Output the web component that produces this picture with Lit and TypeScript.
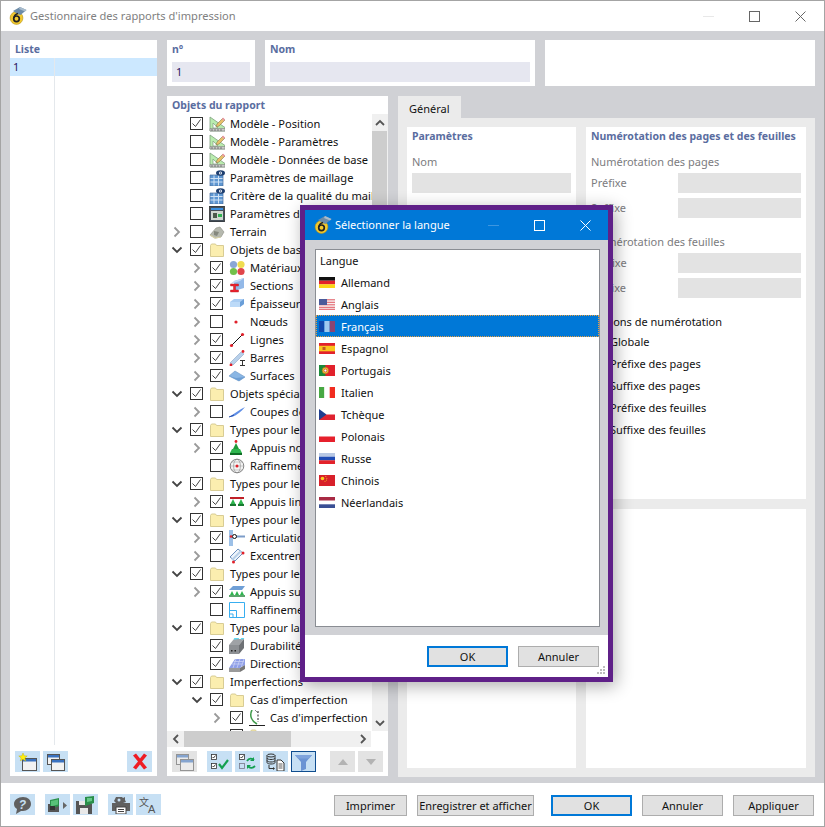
import { LitElement, html, css, svg } from "lit";
import { customElement } from "lit/decorators.js";

const ico = (body: unknown, w = 16, h = 16) =>
  html`<svg class="ic" width=${w} height=${h} viewBox="0 0 ${w} ${h}">${body}</svg>`;

const ICONS: Record<string, unknown> = {
  ruler: svg`<path d="M1 1v14h15v-3.500L1 1z" fill="#b9ecae" stroke="#7fa07f" stroke-width=".8"/><path d="M4 7v5h5z" fill="#fff" stroke="#7fa07f" stroke-width=".7"/><path d="M1 12.500h15V15H1z" fill="#c9cbc9" stroke="#777" stroke-width=".5"/><path d="M3 13v2M6 13v2M9 13v2M12 13v2" stroke="#555" stroke-width=".7"/><path d="M8 8l6-6 2 2-6 6-3 1z" fill="#e8c16a" stroke="#8a7a4a" stroke-width=".6"/><path d="M13 3l1-1.500 2 2L14.600 5z" fill="#ee9aa8"/>`,
  mesh: svg`<path d="M1 5h13v11H1z" fill="#5f97d2"/><path d="M1 8.500h13M1 12h13M5 5v11M9.500 5v11" stroke="#cfe2f6" stroke-width="1"/><path d="M1 5h13v11H1z" fill="none" stroke="#486f9f" stroke-width=".7"/><ellipse cx="11.500" cy="3" rx="4.500" ry="2.800" fill="#1f3f70"/><circle cx="11.500" cy="3" r="1.500" fill="#fff"/><circle cx="11.500" cy="3" r=".7" fill="#1f3f70"/>`,
  params: svg`<rect x=".5" y="0" width="15" height="16" fill="#45505a" stroke="#222" stroke-width=".7"/><rect x="2" y="2" width="12" height="2" fill="#3a8fe0"/><rect x="2" y="5" width="12" height="9" fill="#cfd7cf"/><rect x="4" y="7" width="4" height="5" fill="#4a5a4a"/><rect x="9" y="8" width="4" height="3" fill="#2fb04f"/>`,
  terrain: svg`<path d="M1 11l6-7 4-1 4 5-3 5-6 1z" fill="#b5b8ae" stroke="#8d8f85" stroke-width=".6"/><path d="M5 7l5 1-2 4-3-1z" fill="#85887e"/><path d="M1 11l5 3 6-1" fill="none" stroke="#d5d0a8" stroke-width="1.200"/>`,
  folder: svg`<path d="M1.500 3.500l1-1.500h4l1 1.500h7v11h-13z" fill="#fbeeaf" stroke="#d8cc94" stroke-width="1"/>`,
  materials: svg`<circle cx="4.500" cy="4.500" r="3.600" fill="#8aa6d6"/><circle cx="12" cy="4.500" r="3.600" fill="#f0dc50"/><circle cx="4.500" cy="11.500" r="3.600" fill="#72c04a"/><circle cx="12" cy="11.500" r="3.600" fill="#e0454a"/>`,
  sections: svg`<path d="M5 3l10-3v10l-10 3z" fill="#93b9e8"/><path d="M1 6l4-3 10-3-4 3z" fill="#c4daf4"/><path d="M1.500 6h8v2h-3v4h3v2h-8v-2h3V8h-3z" fill="#ee2430" stroke="#a11" stroke-width=".4"/>`,
  thick: svg`<path d="M1 6l4-3h10v5l-4 3H1z" fill="#a9cdf3"/><path d="M1 6h10v5H1z" fill="#bcdaf8"/><path d="M11 6l4-3v5l-4 3z" fill="#6a9ed8"/>`,
  node: svg`<circle cx="7" cy="8" r="1.600" fill="#e0202a"/>`,
  line: svg`<path d="M2 14L14 2" stroke="#111" stroke-width="1"/><circle cx="2.500" cy="13.500" r="1.600" fill="#e0202a"/><circle cx="13.500" cy="2.500" r="1.600" fill="#e0202a"/>`,
  bar: svg`<path d="M1 13L12 2l3 2L4 15z" fill="#b8d0ea" stroke="#8ba6c6" stroke-width=".6"/><circle cx="2" cy="15" r="1.400" fill="#e0202a"/><circle cx="14" cy="1.500" r="1.400" fill="#e0202a"/><path d="M11 11h5M13.500 11v5M11 16h5" stroke="#333" stroke-width="1" transform="translate(0 -.5)"/>`,
  surface: svg`<path d="M0 8l6-5 10 6-6 4z" fill="#8ab6e4" stroke="#6f97c4" stroke-width=".6"/><path d="M0 8l10 5 6-4-9 1z" fill="#6d9ed4"/>`,
  cut: svg`<path d="M0 13C6 9 10 6 16 3c-3 4-8 8-13 10z" fill="#5f8ee6"/><path d="M0 13l5-2" stroke="#2a4fa8" stroke-width="1"/>`,
  nodal: svg`<circle cx="7" cy="1.500" r="1.400" fill="#e0202a"/><path d="M7 3l3 6H4z" fill="#1f9a3a"/><path d="M3 9h8l2 4H1z" fill="#2db54e"/><path d="M1 13h12v2H1z" fill="#0f6d26"/>`,
  refine: svg`<circle cx="8" cy="8" r="6.800" fill="#f4f4f4" stroke="#666" stroke-width=".8"/><ellipse cx="8" cy="8" rx="3.400" ry="6.800" fill="none" stroke="#888" stroke-width=".6"/><path d="M1 8h14M2.500 4h11M2.500 12h11" stroke="#999" stroke-width=".5"/><circle cx="8" cy="8" r="1.500" fill="#e0202a"/>`,
  linesup: svg`<path d="M1 3h14v2H1z" fill="#c02028"/><path d="M4 5l2.500 5h-5zM12 5l2.500 5h-5z" fill="#2db54e"/><path d="M1 10h6v2H1zM9 10h6v2H9z" fill="#187a30"/>`,
  hinge: svg`<path d="M1 0v16M3 0v16" stroke="#7cace0" stroke-width="1.500"/><path d="M6 6.500h10" stroke="#7c9cc8" stroke-width="2"/><circle cx="5.500" cy="6.500" r="2" fill="#fff" stroke="#111" stroke-width="1"/><circle cx="2" cy="6.500" r="1.300" fill="#e0202a"/>`,
  excent: svg`<path d="M1 9l8-8 5 4-8 8z" fill="#eef4fb" stroke="#6a8fbf" stroke-width="1"/><path d="M3 12L12 3" stroke="#b8cfe8" stroke-width="2"/><circle cx="4.500" cy="14" r="1.500" fill="#e0202a"/><circle cx="14" cy="5" r="1.500" fill="#e0202a"/>`,
  surfsup: svg`<path d="M0 6l4-4h12l-3 4z" fill="#6f9fd6"/><path d="M3 7l2 4H1zM8 7l2 4H6zM13 7l2 4h-4z" fill="#2db54e"/><path d="M0 11h16v2H0z" fill="#5aa46a"/>`,
  refsurf: svg`<path d="M.5 .5h15v15H.5z" fill="#fff" stroke="#38aef0" stroke-width="1"/><path d="M.5 8.500h7v7M.5 12h3.500v3.500" fill="none" stroke="#38aef0" stroke-width="1"/>`,
  durab: svg`<path d="M0 7l5-6h10l-5 6z" fill="#9fa2a6"/><path d="M0 7h10v9H0z" fill="#8d9094"/><path d="M10 7l5-6v9l-5 6z" fill="#6e7175"/><path d="M5 1l5-1M12 1l3-1" stroke="#5fd8f0" stroke-width="1.500"/><rect x="2" y="12" width="1.500" height="1.500" fill="#222"/><rect x="5.500" y="12" width="1.500" height="1.500" fill="#222"/>`,
  direc: svg`<path d="M0 12L6 3h10v6l-5 3z" fill="#8f9fe8"/><path d="M3 8h10M5 5.500h10M7 3l-3 9M11 3l-3 9M15 3l-3 9" stroke="#c9d0f4" stroke-width=".8"/><path d="M0 12h11v4H0z" fill="#9a9a9a"/><path d="M11 12l5-3v4l-5 3z" fill="#777"/>`,
  imperf: svg`<path d="M3 0c-3 6 0 11 5 14" fill="none" stroke="#3f9a4a" stroke-width="1.600"/><path d="M9 1v11" stroke="#222" stroke-width="1" stroke-dasharray="2 1.500"/><path d="M0 15.500h16" stroke="#222" stroke-width="1"/><path d="M6 0l3 3" stroke="#555" stroke-width=".7"/>`,
};

const FLAGS: Record<string, unknown> = {
  de: svg`<rect width="16" height="3.700" fill="#111"/><rect y="3.700" width="16" height="3.700" fill="#e3222a"/><rect y="7.300" width="16" height="3.700" fill="#fbd616"/>`,
  en: svg`<rect width="16" height="11" fill="#f7f0f0"/><path d="M0 .8h16M0 3.300h16M0 5.800h16M0 8.300h16M0 10.300h16" stroke="#e25a64" stroke-width="1"/><rect width="8" height="6" fill="#4a5a9a"/>`,
  fr: svg`<rect width="5.400" height="11" fill="#1b2f92"/><rect x="5.400" width="5.300" height="11" fill="#fff"/><rect x="10.700" width="5.300" height="11" fill="#e32636"/>`,
  es: svg`<rect width="16" height="11" fill="#e2212c"/><rect y="2.800" width="16" height="5.500" fill="#f9c51e"/><rect x="3.500" y="4" width="3" height="3" fill="#c25a20"/>`,
  pt: svg`<rect width="16" height="11" fill="#e2212c"/><rect width="6.400" height="11" fill="#1c8a3a"/><circle cx="6.400" cy="5.500" r="3.200" fill="#f6d43a" stroke="#a05a20" stroke-width=".6"/><circle cx="6.400" cy="5.500" r="1.500" fill="#fff" stroke="#c22" stroke-width=".7"/>`,
  it: svg`<rect width="5.400" height="11" fill="#47a843"/><rect x="5.400" width="5.300" height="11" fill="#fff"/><rect x="10.700" width="5.300" height="11" fill="#f12c20"/>`,
  cz: svg`<rect width="16" height="5.500" fill="#fff"/><rect y="5.500" width="16" height="5.500" fill="#df2230"/><path d="M0 0l7.500 5.500L0 11z" fill="#1f3d8f"/>`,
  pl: svg`<rect width="16" height="5.500" fill="#fff"/><rect y="5.500" width="16" height="5.500" fill="#e6202c"/>`,
  ru: svg`<rect width="16" height="3.700" fill="#b8c8e4"/><rect y="3.700" width="16" height="3.700" fill="#1f4bb4"/><rect y="7.300" width="16" height="3.700" fill="#e3222a"/>`,
  cn: svg`<rect width="16" height="11" fill="#d8202a"/><circle cx="3.500" cy="3.500" r="1.800" fill="#f8d020"/><circle cx="6.800" cy="1.600" r=".5" fill="#f8d020"/><circle cx="7.800" cy="3.200" r=".5" fill="#f8d020"/><circle cx="7.500" cy="5" r=".5" fill="#f8d020"/><circle cx="6" cy="6.300" r=".5" fill="#f8d020"/>`,
  nl: svg`<rect width="16" height="3.700" fill="#a82a44"/><rect y="3.700" width="16" height="3.700" fill="#fff"/><rect y="7.300" width="16" height="3.700" fill="#3a4f94"/>`,
};

const win = (x: number, y: number, w = 13, h = 11) => svg`<rect x=${x + .5} y=${y + .5} width=${w} height=${h} fill="#f2f2f2" stroke="#555"/><rect x=${x + 1} y=${y + 1} width=${w - 1} height="2.500" fill="#3a72c0"/>`;

const TOOLS: Record<string, unknown> = {
  newwin: ico(svg`${win(4, 5, 14, 12)}<path d="M5 0l1.200 2.800 3 .2-2.300 1.900.8 3L5 6.300 2.300 7.900l.8-3L.8 3l3-.2z" fill="#ffee10" stroke="#b8a800" stroke-width=".4"/>`, 19, 18),
  copywin: ico(svg`${win(1, 1, 12, 10)}${win(5, 6, 13, 11)}`, 19, 18),
  del: ico(svg`<path d="M2 3l3-2 4 5 4-5 3 2-5 6 5 6-3 2-4-5-4 5-3-2 5-6z" fill="#ee1c25" transform="translate(0 -.5)"/>`, 18, 18),
  copygray: ico(svg`<g opacity=".55">${win(1, 1, 12, 10)}${win(5, 6, 13, 11)}</g>`, 19, 18),
  checkall: ico(svg`<g fill="#fff" stroke="#333" stroke-width=".8"><rect x="1.500" y="1.500" width="5" height="5"/><rect x="1.500" y="10.500" width="5" height="5"/></g><path d="M2.500 4l1 1 2-2.500M2.500 13l1 1 2-2.500" fill="none" stroke="#111" stroke-width=".8"/><path d="M9 11l3 4 6-8" fill="none" stroke="#14a050" stroke-width="2.200"/>`, 19, 18),
  toggle: ico(svg`<g fill="#fff" stroke="#333" stroke-width=".8"><rect x="1.500" y="1.500" width="5" height="5"/></g><rect x="1.500" y="10.500" width="5" height="5" fill="none" stroke="#778" stroke-width=".8"/><path d="M2.500 4l1 1 2-2.500" fill="none" stroke="#111" stroke-width=".8"/><path d="M9 8c2-3 5-3 7-1M17 13c-2 2-5 3-7 0" fill="none" stroke="#14a050" stroke-width="1.800"/><path d="M16 4v4h-4zM9 16v-4h4z" fill="#14a050"/>`, 19, 18),
  dbdoc: ico(svg`<g fill="none" stroke="#333" stroke-width="1"><ellipse cx="5" cy="2.500" rx="4" ry="1.500"/><path d="M1 2.500v7c0 2 8 2 8 0v-7M1 5c0 2 8 2 8 0M1 7.500c0 2 8 2 8 0"/><path d="M3 12v3.500h5"/></g><path d="M7 14l2 1.500L7 17z" fill="#333"/><path d="M11 7h4l3 3v8h-7z" fill="#fff" stroke="#333" stroke-width="1"/><path d="M12.500 11h4M12.500 13h4M12.500 15h4" stroke="#333" stroke-width=".8"/>`, 19, 18),
  filter: ico(svg`<path d="M1 2h17l-6 7v7l-5 2V9z" fill="#6b94d4"/><path d="M1 2h17l-3 3.500H4z" fill="#7ea3dc"/>`, 19, 18),
  up: ico(svg`<path d="M9 5l5 6H4z" fill="#b3b3b3"/>`, 18, 16),
  down: ico(svg`<path d="M9 11l5-6H4z" fill="#b3b3b3"/>`, 18, 16),
  help: ico(svg`<path d="M10 1c5 0 8 3 8 7s-4 7-8 7l-2 0-5 3 1-5C2 12 1 10 1 8c0-4 4-7 9-7z" fill="#606060"/><text x="9.500" y="13" font-size="12" font-weight="700" font-style="italic" fill="#c7e0f4" text-anchor="middle" font-family="Liberation Sans">?</text>`, 20, 18),
  exportg: ico(svg`<path d="M2 8h11v8H2z" fill="#555"/><path d="M4 4l9-2v8l-9 3z" fill="#2a8f4a"/><path d="M5 5l7-1.500v5l-7 2z" fill="#58c078"/><path d="M4 10h5v4H4z" fill="#333"/><path d="M17 6l4 3.500-4 3.500z" fill="#666"/>`, 23, 18),
  saveg: ico(svg`<path d="M0 5h13l3 3v10H0z" fill="#555"/><path d="M3 5h8v4H3zM4 12h8v6H4z" fill="#e8e8e8"/><path d="M9 1l9-1v7l-9 3z" fill="#2a8f4a"/><path d="M11 2h5v3l-5 1z" fill="#66c888"/>`, 19, 18),
  printg: ico(svg`<path d="M5 1h6l1 1 2-1v3l1 2-3 1H5L3 5l1-2z" fill="#606060"/><circle cx="8" cy="4" r="1.500" fill="#c7e0f4"/><path d="M1 7h18v8H1z" fill="#606060"/><path d="M5 11h10v7H5z" fill="#fff" stroke="#444"/><path d="M7 13.500h6M7 15.500h6" stroke="#444"/>`, 20, 18),
  translate: html`<svg class="ic" width="20" height="18" viewBox="0 0 20 18"><text x="0" y="10" font-size="10" fill="#555" font-family="Noto Sans CJK SC,sans-serif">文</text><text x="9" y="17" font-size="11" fill="#555" font-family="Liberation Sans">A</text></svg>`,
};

const logo = html`<svg class="ic" width="18" height="18" viewBox="0 0 18 18">
  <circle cx="7.500" cy="11" r="6.400" fill="#f2c92e" stroke="#b3921c" stroke-width=".6"/>
  <path d="M4 4L11 0l6.500 3-6 5-3-1z" fill="#6d8ca8"/><path d="M11 0l6.500 3-1.500 1.500L10 2z" fill="#a9bccd"/>
  <circle cx="7.500" cy="11.800" r="2.800" fill="none" stroke="#222" stroke-width="1.700"/><path d="M5 11c.3-2.500 1.500-4 4-4.500" fill="none" stroke="#222" stroke-width="1.700"/>
</svg>`;

type Row = [number, boolean | null, string, string, string];
const ROWS: Row[] = [
  [0, true, "n", "ruler", "Modèle - Position"],
  [0, false, "n", "ruler", "Modèle - Paramètres"],
  [0, false, "n", "ruler", "Modèle - Données de base"],
  [0, false, "n", "mesh", "Paramètres de maillage"],
  [0, false, "n", "mesh", "Critère de la qualité du maillage"],
  [0, false, "n", "params", "Paramètres de calcul"],
  [0, false, "r", "terrain", "Terrain"],
  [0, true, "d", "folder", "Objets de base"],
  [1, true, "r", "materials", "Matériaux"],
  [1, true, "r", "sections", "Sections"],
  [1, true, "r", "thick", "Épaisseurs"],
  [1, false, "r", "node", "Nœuds"],
  [1, true, "r", "line", "Lignes"],
  [1, true, "r", "bar", "Barres"],
  [1, true, "r", "surface", "Surfaces"],
  [0, true, "d", "folder", "Objets spéciaux"],
  [1, false, "r", "cut", "Coupes de résultats"],
  [0, true, "d", "folder", "Types pour les nœuds"],
  [1, true, "r", "nodal", "Appuis nodaux"],
  [1, false, "n", "refine", "Raffinements"],
  [0, true, "d", "folder", "Types pour les lignes"],
  [1, true, "r", "linesup", "Appuis linéaires"],
  [0, true, "d", "folder", "Types pour les barres"],
  [1, true, "r", "hinge", "Articulations"],
  [1, false, "r", "excent", "Excentrements"],
  [0, true, "d", "folder", "Types pour les surfaces"],
  [1, true, "r", "surfsup", "Appuis surfaciques"],
  [1, false, "n", "refsurf", "Raffinements"],
  [0, true, "d", "folder", "Types pour la conception"],
  [1, true, "n", "durab", "Durabilité"],
  [1, true, "n", "direc", "Directions"],
  [0, true, "d", "folder", "Imperfections"],
  [1, true, "d", "folder", "Cas d'imperfection"],
  [2, true, "r", "imperf", "Cas d'imperfection"],
  [2, true, "n", "folder", ""],
];

const LANGS: [string, string][] = [
  ["de", "Allemand"], ["en", "Anglais"], ["fr", "Français"], ["es", "Espagnol"],
  ["pt", "Portugais"], ["it", "Italien"], ["cz", "Tchèque"], ["pl", "Polonais"],
  ["ru", "Russe"], ["cn", "Chinois"], ["nl", "Néerlandais"],
];

const chevR = html`<svg width="8" height="12" viewBox="0 0 8 12"><path d="M1.500 1.500L6 6l-4.500 4.500" fill="none" stroke="#9a9a9a" stroke-width="1.800"/></svg>`;
const chevD = html`<svg width="12" height="8" viewBox="0 0 12 8"><path d="M1.500 1.500L6 6l4.500-4.500" fill="none" stroke="#444" stroke-width="1.800"/></svg>`;
const checkMark = html`<svg width="11" height="11" viewBox="0 0 11 11"><path d="M1.500 5.500l3 3 5-7" fill="none" stroke="#444" stroke-width="1"/></svg>`;

const arrow = (d: string) => html`<svg width="10" height="8" viewBox="0 0 10 8"><path d=${d} fill="none" stroke="#555" stroke-width="1.800"/></svg>`;

@customElement("app-root")
export class AppRoot extends LitElement {
  static styles = css`
    :host { display: block; width: 825px; height: 827px; position: relative; overflow: hidden;
      font-family: "Noto Sans", "Liberation Sans", sans-serif; font-size: 11px; color: #111; }
    * { box-sizing: border-box; }
    .ic { display: block; flex: none; }
    .win { width: 825px; height: 827px; border: 1px solid #a4a4a4; background: #d0d1d5; display: flex; flex-direction: column; }
    .title { height: 30px; background: #fff; display: flex; align-items: center; padding-left: 8px; flex: none; }
    .title .name { margin-left: 3px; color: #808080; font-size: 11.1px; flex: 1; padding-bottom: 1px; }
    .ctrl { display: flex; align-items: center; flex: none; }
    .title .ctrl { margin-right: 1px; }
    .ctrl span { width: 46px; height: 30px; display: flex; align-items: center; justify-content: center; }
    .main { flex: 1; display: flex; gap: 10px; padding: 9px 9px 7px 9px; min-height: 0; }
    .panel { background: #fff; display: flex; flex-direction: column; min-width: 0; }
    .ph { height: 18px; flex: none; padding: 2px 5px 0; color: #5a6d9f; font-weight: 700; font-size: 10.5px; line-height: 15px; white-space: nowrap; }
    .list { width: 147px; flex: none; }
    .listbody { flex: 1; position: relative; display: flex; flex-direction: column; min-height: 0; }
    .listsel { height: 18px; background: #cce8ff; padding-left: 3px; line-height: 18px; color: #2a1460; flex: none; }
    .listsep { position: absolute; left: 44px; top: 0; bottom: 2px; width: 1px; background: #e4e8ec; }
    .tb { height: 21px; flex: none; display: flex; margin: 4px 5px; gap: 3px; }
    .b { width: 25px; height: 21px; flex: none; background: #c7e0f4; display: flex; align-items: center; justify-content: center; }
    .b.g { background: #e3e3e3; }
    .b.act { border: 1px solid #0f4d8f; }
    .ml-a { margin-left: auto; }
    .ml10 { margin-left: 7px; }
    .ml14 { margin-left: 11px; }
    .right { flex: 1; display: flex; flex-direction: column; gap: 10px; min-width: 0; }
    .toprow { height: 46px; display: flex; gap: 10px; flex: none; }
    .no { width: 88px; flex: none; }
    .grow { flex: 1; }
    .inp { height: 20px; margin: 4px 5px; background: #e6e7f0; padding-left: 4px; line-height: 20px; color: #2a1460; }
    .bot { flex: 1; display: flex; gap: 10px; min-height: 0; }
    .obj { width: 221px; flex: none; }
    .treewrap { height: 617px; display: flex; flex: none; }
    .tree { width: 205px; flex: none; overflow: hidden; padding-top: 1px; }
    .row { height: 18px; display: flex; align-items: center; white-space: nowrap; font-size: 11.1px; }
    .row > span:last-child { padding-bottom: 1px; }
    .chev { width: 20px; margin-right: 3px; height: 18px; display: flex; align-items: center; justify-content: center; flex: none; }
    .cb { width: 13px; height: 13px; border: 1px solid #333; background: #fff; display: flex; align-items: center; justify-content: center; flex: none; margin-right: 6px; margin-top: -1px; }
    .row .ic { margin-right: 5px; }
    .vs { width: 16px; flex: none; background: #f0f0f0; display: flex; flex-direction: column; }
    .vs i { height: 17px; display: flex; align-items: center; justify-content: center; flex: none; }
    .vs b { flex: 1; background: #cdcdcd; margin-right: 1px; }
    .vs u { flex: 1; }
    .hs { height: 16px; width: 204px; background: #f0f0f0; display: flex; align-items: center; flex: none; }
    .hs i { width: 17px; display: flex; align-items: center; justify-content: center; flex: none; }
    .hs b { width: 107px; height: 16px; background: #cdcdcd; flex: none; }
    .hs u { flex: 1; }
    .tabs { flex: 1; display: flex; flex-direction: column; min-width: 0; }
    .tab { width: 63px; height: 22px; background: #ebebeb; padding-left: 11px; line-height: 25px; flex: none; }
    .tabbody { flex: 1; background: #ebebeb; padding: 9px; display: grid; grid-template-columns: 169px 220px; grid-template-rows: 372px 259px; gap: 10px; }
    .lbl { height: 18px; margin: 8px 5px 0; line-height: 18px; color: #7c7c80; white-space: nowrap; }
    .lbl.sp { margin-top: 15px; }
    .full { height: 20px; margin: 2px 5px 0; background: #e3e3e3; }
    .form { display: grid; grid-template-columns: 87px 123px; padding: 0 5px; }
    .form span { color: #7c7c80; line-height: 20px; height: 20px; white-space: nowrap; }
    .form em { background: #e3e3e3; height: 20px; display: block; }
    .form .t2 { margin-top: 5px; }
    .form .t0 { margin-top: 2px; }
    .opt { height: 18px; margin: 15px 5px 0; line-height: 18px; white-space: nowrap; }
    .radio { height: 22px; display: flex; align-items: center; padding: 0 0 2px 6px; white-space: nowrap; }
    .radio s { width: 13px; height: 13px; border: 1px solid #333; border-radius: 50%; margin-right: 5px; flex: none; }
    .footer { height: 43px; flex: none; background: #fff; display: flex; padding: 11px 10px 0 9px; position: relative; }
    .ftb { display: flex; gap: 3px; height: 21px; }
    .ftb.sp { margin-left: 10px; }
    .btn { height: 21px; width: 81px; border: 1px solid #adadad; background: #e1e1e1; display: flex; align-items: center; justify-content: center; flex: none; white-space: nowrap; color: #111; }
    .btn.def { border: 2px solid #0078d7; }
    .btn.w73 { width: 73px; }
    .btn.w117 { width: 117px; }
    .btns { display: flex; margin-left: auto; margin-top: 1px; }
    .btns .btn { margin-left: 10px; }
    .btns .btn.def { margin-left: 17px; }
    .dlg { position: absolute; left: 300px; top: 205px; width: 313px; height: 477px; border: 5px solid #5f2088; background: #fff;
      display: flex; flex-direction: column; box-shadow: 3px 4px 16px rgba(0,0,0,.32); }
    .dtitle { height: 30px; background: #0078d7; flex: none; display: flex; align-items: center; padding-left: 9px; color: #fff; }
    .dtitle .name { flex: 1; margin-left: 3px; font-size: 11px; padding-bottom: 1px; }
    .dbody { height: 395px; background: #d0d1d5; flex: none; padding: 9px 8px 8px 10px; }
    .lb { height: 100%; background: #fff; border: 1px solid #8a8d93; }
    .lh { height: 21px; line-height: 21px; padding-left: 4px; }
    .lr { height: 22px; display: flex; align-items: center; padding-left: 3px; gap: 6px; }
    .lr svg { display: block; flex: none; }
    .lr.sel { background: #0078d7; color: #fff; outline: 1px dotted #e8a040; outline-offset: -1px; }
    .lr.sel svg { opacity: .62; }
    .dfoot { flex: 1; display: flex; justify-content: flex-end; gap: 10px; padding: 11px 9px 0 0; position: relative; }
    .grip { position: absolute; right: 2px; bottom: 2px; }
  `;

  private row(r: Row) {
    const [lvl, chk, chev, icon, label] = r;
    return html`<div class="row" style="padding-left:${lvl * 20}px">
      <span class="chev">${chev === "r" ? chevR : chev === "d" ? chevD : ""}</span>
      <span class="cb">${chk ? checkMark : ""}</span>
      ${ico(ICONS[icon])}<span>${label}</span>
    </div>`;
  }

  render() {
    return html`
      <div class="win">
        <div class="title">
          ${logo}<span class="name">Gestionnaire des rapports d'impression</span>
          <div class="ctrl">
            <span><svg width="11" height="11"><path d="M0 5.500h11" stroke="#e8e8e8"/></svg></span>
            <span><svg width="11" height="11"><rect x=".5" y=".5" width="10" height="10" fill="none" stroke="#666"/></svg></span>
            <span><svg width="11" height="11"><path d="M.5 .5l10 10M10.500 .5l-10 10" stroke="#666"/></svg></span>
          </div>
        </div>
        <div class="main">
          <section class="panel list">
            <div class="ph">Liste</div>
            <div class="listbody"><div class="listsep"></div><div class="listsel">1</div></div>
            <div class="tb">
              <div class="b">${TOOLS.newwin}</div><div class="b">${TOOLS.copywin}</div>
              <div class="b ml-a">${TOOLS.del}</div>
            </div>
          </section>
          <div class="right">
            <div class="toprow">
              <section class="panel no"><div class="ph">n°</div><div class="inp">1</div></section>
              <section class="panel grow"><div class="ph">Nom</div><div class="inp"></div></section>
              <section class="panel grow"></section>
            </div>
            <div class="bot">
              <section class="panel obj">
                <div class="ph">Objets du rapport</div>
                <div class="treewrap">
                  <div class="tree">${ROWS.map((r) => this.row(r))}</div>
                  <div class="vs">
                    <i>${arrow("M1 6l4-4 4 4")}</i><b></b><u></u>
                    <i>${arrow("M1 2l4 4 4-4")}</i>
                  </div>
                </div>
                <div class="hs">
                  <i>${html`<svg width="8" height="10" viewBox="0 0 8 10"><path d="M6 1L2 5l4 4" fill="none" stroke="#555" stroke-width="1.800"/></svg>`}</i><b></b><u></u>
                  <i>${html`<svg width="8" height="10" viewBox="0 0 8 10"><path d="M2 1l4 4-4 4" fill="none" stroke="#555" stroke-width="1.800"/></svg>`}</i>
                </div>
                <div class="tb">
                  <div class="b g">${TOOLS.copygray}</div>
                  <div class="b ml10">${TOOLS.checkall}</div><div class="b">${TOOLS.toggle}</div>
                  <div class="b">${TOOLS.dbdoc}</div><div class="b act">${TOOLS.filter}</div>
                  <div class="b g ml14">${TOOLS.up}</div><div class="b g">${TOOLS.down}</div>
                </div>
              </section>
              <div class="tabs">
                <div class="tab">Général</div>
                <div class="tabbody">
                  <section class="panel">
                    <div class="ph">Paramètres</div>
                    <div class="lbl">Nom</div>
                    <div class="full"></div>
                  </section>
                  <section class="panel">
                    <div class="ph">Numérotation des pages et des feuilles</div>
                    <div class="lbl">Numérotation des pages</div>
                    <div class="form">
                      <span class="t0">Préfixe</span><em class="t0"></em>
                      <span class="t2">Suffixe</span><em class="t2"></em>
                    </div>
                    <div class="lbl sp">Numérotation des feuilles</div>
                    <div class="form">
                      <span class="t0">Préfixe</span><em class="t0"></em>
                      <span class="t2">Suffixe</span><em class="t2"></em>
                    </div>
                    <div class="opt">Options de numérotation</div>
                    ${["Globale", "Préfixe des pages", "Suffixe des pages", "Préfixe des feuilles", "Suffixe des feuilles"].map(
                      (t) => html`<div class="radio"><s></s>${t}</div>`
                    )}
                  </section>
                  <section class="panel"></section>
                  <section class="panel"></section>
                </div>
              </div>
            </div>
          </div>
        </div>
        <div class="footer">
          <div class="ftb"><div class="b">${TOOLS.help}</div></div>
          <div class="ftb sp"><div class="b">${TOOLS.exportg}</div><div class="b">${TOOLS.saveg}</div></div>
          <div class="ftb sp"><div class="b">${TOOLS.printg}</div><div class="b">${TOOLS.translate}</div></div>
          <div class="btns">
            <div class="btn w73">Imprimer</div>
            <div class="btn w117">Enregistrer et afficher</div>
            <div class="btn def">OK</div>
            <div class="btn">Annuler</div>
            <div class="btn">Appliquer</div>
          </div>
        </div>
      </div>
      <div class="dlg">
        <div class="dtitle">
          ${logo}<span class="name">Sélectionner la langue</span>
          <div class="ctrl">
            <span><svg width="11" height="11"><path d="M0 5.500h11" stroke="#3d96e0"/></svg></span>
            <span><svg width="11" height="11"><rect x=".5" y=".5" width="10" height="10" fill="none" stroke="#fff"/></svg></span>
            <span><svg width="11" height="11"><path d="M.5 .5l10 10M10.500 .5l-10 10" stroke="#fff"/></svg></span>
          </div>
        </div>
        <div class="dbody">
          <div class="lb">
            <div class="lh">Langue</div>
            ${LANGS.map(([c, n]) => html`<div class="lr ${c === "fr" ? "sel" : ""}">
              <svg width="16" height="11" viewBox="0 0 16 11">${FLAGS[c]}</svg><span>${n}</span></div>`)}
          </div>
        </div>
        <div class="dfoot">
          <div class="btn def">OK</div><div class="btn">Annuler</div>
          <svg class="grip" width="9" height="9" viewBox="0 0 9 9"><path d="M6 0h2v2H6zM3 3h2v2H3zM6 3h2v2H6zM0 6h2v2H0zM3 6h2v2H3zM6 6h2v2H6z" fill="#bdbdbd"/></svg>
        </div>
      </div>
    `;
  }
}
